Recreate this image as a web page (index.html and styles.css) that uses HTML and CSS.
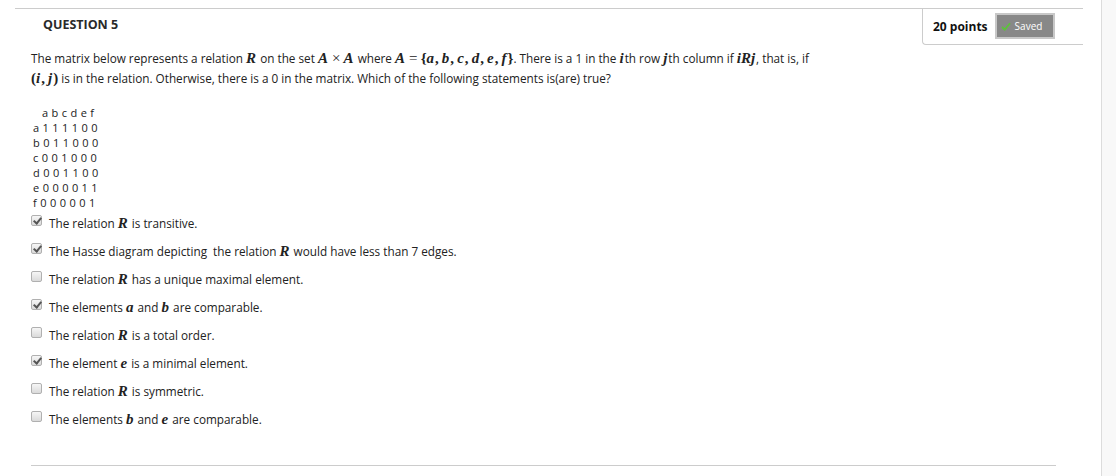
FILE: index.html
```html
<!DOCTYPE html>
<html>
<head>
<meta charset="utf-8">
<link rel="stylesheet" href="styles.css">
</head>
<body>
<div class="page">
  <div class="main">
    <div class="question">
      <div class="qhead">
        <h2 class="qtitle">QUESTION 5</h2>
        <div class="points">
          <span class="pts">20 points</span>
          <span class="saved"><svg class="tick" width="10" height="9" viewBox="0 0 10 9"><path d="M1 5 L3.8 7.6 L9 1.2" fill="none" stroke="#5cc33a" stroke-width="1.8"/></svg>Saved</span>
        </div>
      </div>
      <div class="qbody">
        <p class="stem">The matrix below represents a relation <i class="m">R</i> on the set <i class="m">A</i> <span class="mo">×</span> <i class="m">A</i> where <i class="m">A</i> <span class="mo">=</span> <span class="mu">{</span><i class="m">a</i><span class="mu">,</span> <i class="m">b</i><span class="mu">,</span> <i class="m">c</i><span class="mu">,</span> <i class="m">d</i><span class="mu">,</span> <i class="m">e</i><span class="mu">,</span> <i class="m">f</i><span class="mu">}</span>. There is a 1 in the <i class="m">i</i>th row <i class="m">j</i>th column if <i class="m">iRj</i>, that is, if<br><span class="mu">(</span><i class="m">i</i><span class="mu">,</span> <i class="m">j</i><span class="mu">)</span> is in the relation. Otherwise, there is a 0 in the matrix. Which of the following statements is(are) true?</p>
        <div class="matrix">
          <div class="mrow hdr">a b c d e f</div>
          <div class="mrow">a 1 1 1 1 0 0</div>
          <div class="mrow">b 0 1 1 0 0 0</div>
          <div class="mrow">c 0 0 1 0 0 0</div>
          <div class="mrow">d 0 0 1 1 0 0</div>
          <div class="mrow">e 0 0 0 0 1 1</div>
          <div class="mrow">f 0 0 0 0 0 1</div>
        </div>
        <ul class="answers">
          <li class="ans"><span class="cb on"></span><span>The relation <i class="m">R</i> is transitive.</span></li>
          <li class="ans"><span class="cb on"></span><span>The Hasse diagram depicting&nbsp; the relation <i class="m">R</i> would have less than 7 edges.</span></li>
          <li class="ans"><span class="cb"></span><span>The relation <i class="m">R</i> has a unique maximal element.</span></li>
          <li class="ans"><span class="cb on"></span><span>The elements <i class="m">a</i> and <i class="m">b</i> are comparable.</span></li>
          <li class="ans"><span class="cb"></span><span>The relation <i class="m">R</i> is a total order.</span></li>
          <li class="ans"><span class="cb on"></span><span>The element <i class="m">e</i> is a minimal element.</span></li>
          <li class="ans"><span class="cb"></span><span>The relation <i class="m">R</i> is symmetric.</span></li>
          <li class="ans"><span class="cb"></span><span>The elements <i class="m">b</i> and <i class="m">e</i> are comparable.</span></li>
        </ul>
      </div>
      <div class="qfoot"></div>
    </div>
  </div>
  <div class="side"></div>
</div>
</body>
</html>
```
FILE: styles.css
```css
html, body { margin: 0; padding: 0; background: #fff; }
body { font-family: "Open Sans", "Liberation Sans", sans-serif; color: #222; font-size: 11.75px; }
.page { display: flex; height: 476px; overflow: hidden; }
.main { width: 1101px; flex: none; padding-left: 15px; box-sizing: border-box; }
.side { flex: 1; background: #f8f8f8; border-left: 1px solid #dcdcdc; }
.question { margin-top: 8px; width: 1068px; border-top: 1px solid #ccc; }
.qhead { display: flex; justify-content: space-between; align-items: flex-start; }
.qtitle { margin: 7px 0 0 28px; font-size: 12.5px; font-weight: 700; color: #2a2a2a; }
.points { width: 161px; height: 36px; box-sizing: border-box; border-left: 1px solid #ccc; border-bottom: 1px solid #ccc; border-bottom-left-radius: 4px; display: flex; align-items: center; padding-left: 10px; gap: 7px; }
.pts { font-size: 12px; font-weight: 700; color: #111; margin-top: -1px; }
.saved { display: inline-flex; align-items: center; gap: 4px; background: #888; border: 2px solid #c8c8c8; color: #fff; font-size: 10px; height: 26px; box-sizing: border-box; width: 60px; padding-left: 4px; margin-top: -1px; }
.tick { margin-top: 1px; }
.qbody { padding-top: 3px; padding-left: 16px; }
.stem { margin: 0; line-height: 20px; color: #222; }
.m { font-family: "Liberation Serif", "DejaVu Serif", serif; font-style: italic; font-weight: 700; font-size: 15px; line-height: 1; padding-right: 1px; }
.mo, .mu { font-family: "Liberation Serif", "DejaVu Serif", serif; font-size: 15px; line-height: 1; }
.mu { font-weight: 700; }
.matrix { margin-top: 17px; padding-left: 2px; line-height: 15px; font-size: 11px; color: #222; }
.mrow { white-space: pre; letter-spacing: 0.3px; }
.hdr { padding-left: 9px; }
.answers { list-style: none; margin: -1px 0 0 0; padding: 0; }
.ans { display: flex; align-items: center; gap: 7px; height: 28px; color: #222; }
.cb { width: 11px; height: 11px; box-sizing: border-box; border: 1px solid #b0b0b0; border-radius: 2px; background: linear-gradient(#f6f6f6, #dadada); position: relative; flex: none; margin-top: -6px; }
.cb.on::after { content: ""; position: absolute; left: 3px; top: 0px; width: 3px; height: 6px; border: solid #555; border-width: 0 2px 2px 0; transform: rotate(40deg); }
.qfoot { width: 1025px; margin-left: 16px; border-top: 1px solid #ccc; margin-top: 32px; }
```
